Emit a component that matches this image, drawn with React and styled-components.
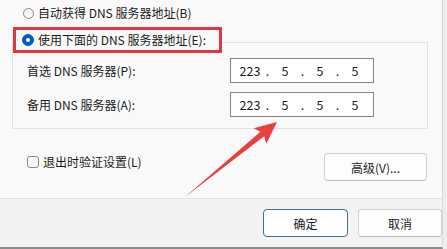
import React from "react";
import styled, { createGlobalStyle } from "styled-components";

const Global = createGlobalStyle`
  html, body { margin: 0; padding: 0; background: #ededed; }
  body {
    width: 447px; height: 249px; overflow: hidden;
    font-family: "Noto Sans CJK SC", "Noto Sans", sans-serif;
  }
`;

const Screen = styled.div`
  position: relative;
  width: 447px;
  height: 249px;
  display: flex;
  background: #ededed;
`;

const Dialog = styled.div`
  width: 443px;
  height: 249px;
  box-sizing: border-box;
  display: flex;
  flex-direction: column;
  border-right: 1px solid #d9d9d9;
  border-bottom: 2px solid #8c8c8c;
  color: #1b1b1b;
  font-size: 12px;
`;

const Content = styled.div`
  height: 198px;
  box-sizing: border-box;
  background: #f9f9f9;
  padding: 4px 14px 0 12px;
  display: flex;
  flex-direction: column;
`;

const OptionRow = styled.label`
  display: flex;
  align-items: center;
  gap: 4px;
  height: 18px;
  line-height: 18px;
  padding-left: ${(p) => p.$indent || 0}px;
  white-space: nowrap;
`;

const Radio = styled.span`
  box-sizing: border-box;
  width: ${(p) => (p.$checked ? 12 : 11)}px;
  height: ${(p) => (p.$checked ? 12 : 11)}px;
  border-radius: 50%;
  flex: none;
  background: ${(p) => (p.$checked ? "#005fb8" : "#f5f5f5")};
  border: 1px solid ${(p) => (p.$checked ? "#005fb8" : "#8a8a8a")};
  display: flex;
  align-items: center;
  justify-content: center;
  &::after {
    content: "";
    display: ${(p) => (p.$checked ? "block" : "none")};
    width: 4px;
    height: 4px;
    border-radius: 50%;
    background: #ffffff;
  }
`;

const Group = styled.div`
  margin-top: 20px;
  border: 1px solid #e2e2e2;
  padding: 0 0 11px 0;
  display: flex;
  flex-direction: column;
`;

const Legend = styled.div`
  margin-top: -16px;
  width: 209px;
  height: 26px;
  box-sizing: border-box;
  border: 3px solid #dc3a40;
  background: #f9f9f9;
  padding-left: 6px;
  display: flex;
  align-items: center;
`;

const FieldGrid = styled.div`
  margin-top: 5px;
  display: grid;
  grid-template-columns: 203px 144px;
  row-gap: 9px;
  padding-left: 14px;
  align-items: center;
`;

const FieldLabel = styled.div`
  white-space: nowrap;
  line-height: 16px;
`;

const IpBox = styled.div`
  box-sizing: border-box;
  width: 144px;
  height: 25px;
  border: 1px solid #858585;
  background: #ffffff;
  display: flex;
  align-items: center;
  padding-left: 5px;
  font-size: 12.5px;
  color: #1b1b1b;
`;

const Octet = styled.span`
  width: 28px;
  text-align: center;
`;

const Dot = styled.span`
  width: 7px;
  text-align: center;
`;

const BottomRow = styled.div`
  margin-top: 24px;
  display: flex;
  justify-content: space-between;
  align-items: flex-start;
  padding-left: 15px;
`;

const CheckRow = styled.label`
  margin-top: 2px;
  display: flex;
  align-items: center;
  gap: 4px;
  height: 14px;
  line-height: 14px;
  white-space: nowrap;
`;

const CheckBox = styled.span`
  box-sizing: border-box;
  width: 12px;
  height: 12px;
  border: 1px solid #8a8a8a;
  border-radius: 3px;
  background: #f7f7f7;
`;

const Button = styled.button`
  box-sizing: border-box;
  width: ${(p) => p.$w}px;
  height: 28px;
  border-radius: 4px;
  border: 1px solid ${(p) => (p.$primary ? "#3f6f93" : "#d0d0d0")};
  border-bottom-color: ${(p) => (p.$primary ? "#3f6f93" : "#bcbcbc")};
  background: #fdfdfd;
  font-family: inherit;
  font-size: 12px;
  color: #1b1b1b;
  padding: 0;
  margin-right: ${(p) => p.$mr || 0}px;
`;

const Footer = styled.div`
  flex: 1;
  background: #f3f3f3;
  border-top: 1px solid #e3e3e3;
  padding-top: 10px;
  display: flex;
  justify-content: flex-end;
  align-items: flex-start;
  gap: 10px;
`;

const ArrowLayer = styled.svg`
  position: absolute;
  left: 0;
  top: 0;
  pointer-events: none;
`;

function Ip({ parts }) {
  return (
    <IpBox>
      {parts.map((p, i) => (
        <React.Fragment key={i}>
          <Octet>{p}</Octet>
          {i < parts.length - 1 && <Dot>.</Dot>}
        </React.Fragment>
      ))}
    </IpBox>
  );
}

export default function App() {
  const ip = ["223", "5", "5", "5"];
  return (
    <>
      <Global />
      <Screen>
        <Dialog>
          <Content>
            <OptionRow $indent={11}>
              <Radio />
              自动获得 DNS 服务器地址(B)
            </OptionRow>
            <Group>
              <Legend>
                <OptionRow>
                  <Radio $checked />
                  使用下面的 DNS 服务器地址(E):
                </OptionRow>
              </Legend>
              <FieldGrid>
                <FieldLabel>首选 DNS 服务器(P):</FieldLabel>
                <Ip parts={ip} />
                <FieldLabel>备用 DNS 服务器(A):</FieldLabel>
                <Ip parts={ip} />
              </FieldGrid>
            </Group>
            <BottomRow>
              <CheckRow>
                <CheckBox />
                退出时验证设置(L)
              </CheckRow>
              <Button $w={103} $mr={1}>高级(V)...</Button>
            </BottomRow>
          </Content>
          <Footer>
            <Button $w={85} $primary>确定</Button>
            <Button $w={84}>取消</Button>
          </Footer>
        </Dialog>
        <ArrowLayer width="447" height="249" viewBox="0 0 447 249">
          <polygon
            points="185,197 260.4,131.7 253.7,128.2 277,122 266.3,143.8 264.2,136.3"
            fill="#e8403f"
          />
        </ArrowLayer>
      </Screen>
    </>
  );
}
